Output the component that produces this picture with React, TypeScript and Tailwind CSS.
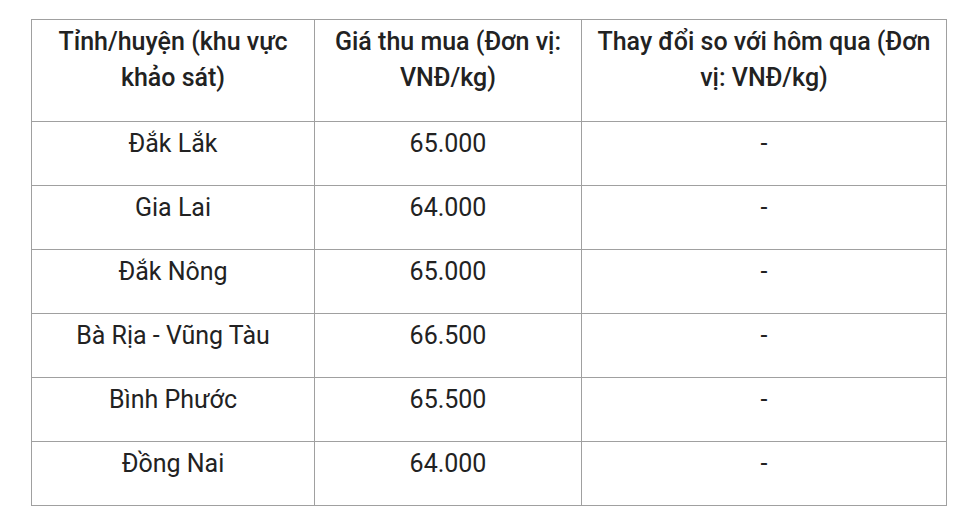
import React from "react";

const rows: [string, string, string][] = [
  ["Đắk Lắk", "65.000", "-"],
  ["Gia Lai", "64.000", "-"],
  ["Đắk Nông", "65.000", "-"],
  ["Bà Rịa - Vũng Tàu", "66.500", "-"],
  ["Bình Phước", "65.500", "-"],
  ["Đồng Nai", "64.000", "-"],
];

export default function App() {
  return (
    <div
      className="w-[980px] h-[512px] bg-white pt-[19px] pl-[31px] text-[#222222]"
      style={{ fontFamily: "Roboto, 'Noto Sans', sans-serif" }}
    >
      <table className="border-collapse table-fixed w-[915px] text-[25px] leading-[36px]">
        <colgroup>
          <col className="w-[283px]" />
          <col className="w-[267px]" />
          <col className="w-[365px]" />
        </colgroup>
        <thead>
          <tr>
            <th className="border border-[#a0a0a0] align-top text-center font-medium pt-[4px] pb-[25px] px-[4px]">
              Tỉnh/huyện (khu vực khảo sát)
            </th>
            <th className="border border-[#a0a0a0] align-top text-center font-medium pt-[4px] pb-[25px] px-[4px]">
              Giá thu mua (Đơn vị: VNĐ/kg)
            </th>
            <th className="border border-[#a0a0a0] align-top text-center font-medium pt-[4px] pb-[25px] px-[4px]">
              Thay đổi so với hôm qua (Đơn vị: VNĐ/kg)
            </th>
          </tr>
        </thead>
        <tbody>
          {rows.map((r, i) => (
            <tr key={i}>
              {r.map((c, j) => (
                <td
                  key={j}
                  className="border border-[#a0a0a0] align-top text-center pt-[4px] pb-[23px] px-[4px]"
                >
                  {c}
                </td>
              ))}
            </tr>
          ))}
        </tbody>
      </table>
    </div>
  );
}
